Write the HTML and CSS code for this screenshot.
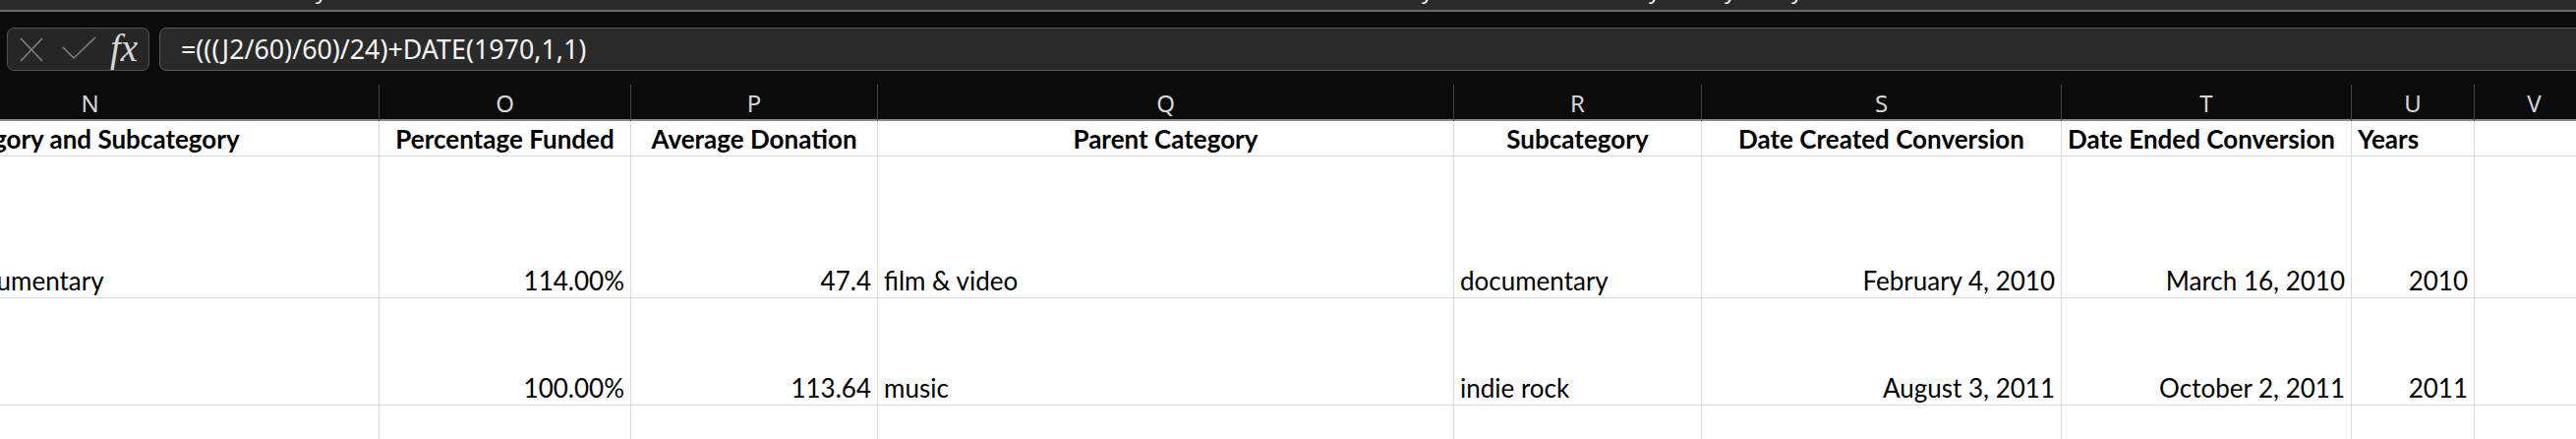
FILE: index.html
```html
<!DOCTYPE html>
<html lang="en">
<head>
<meta charset="utf-8">
<title>Sheet</title>
<link rel="stylesheet" href="styles.css">
</head>
<body>
<div class="app">
  <div class="ribbon">
    <span class="tail t1">y</span>
    <span class="tail t2">y</span>
    <span class="tail t3">y</span>
    <span class="tail t4">y</span>
    <span class="tail t5">y</span>
  </div>
  <div class="fbar">
    <div class="fbtns">
      <svg class="ic-x" width="24" height="25" viewBox="0 0 24 25"><path d="M1 1 L23 24 M23 1 L1 24" stroke="#808080" stroke-width="1.6" fill="none"/></svg>
      <svg class="ic-ok" width="36" height="24" viewBox="0 0 36 24"><path d="M1 11 L12 22 L34 1" stroke="#808080" stroke-width="1.6" fill="none"/></svg>
      <span class="fx">fx</span>
    </div>
    <div class="finput">=(((J2/60)/60)/24)+DATE(1970,1,1)</div>
  </div>
  <div class="sheet">
    <div class="grid colhead">
      <div class="ch">N</div><div class="ch">O</div><div class="ch">P</div><div class="ch">Q</div><div class="ch">R</div><div class="ch">S</div><div class="ch">T</div><div class="ch">U</div><div class="ch">V</div>
    </div>
    <div class="grid row r1">
      <div class="c b ctr">Category and Subcategory</div>
      <div class="c b ctr">Percentage Funded</div>
      <div class="c b ctr">Average Donation</div>
      <div class="c b ctr">Parent Category</div>
      <div class="c b ctr">Subcategory</div>
      <div class="c b ctr">Date Created Conversion</div>
      <div class="c b">Date Ended Conversion</div>
      <div class="c b">Years</div>
      <div class="c"></div>
    </div>
    <div class="grid row r2">
      <div class="c catsub">film &amp; video/documentary</div>
      <div class="c num">114.00%</div>
      <div class="c num">47.4</div>
      <div class="c">film &amp; video</div>
      <div class="c">documentary</div>
      <div class="c num">February 4, 2010</div>
      <div class="c num">March 16, 2010</div>
      <div class="c num">2010</div>
      <div class="c"></div>
    </div>
    <div class="grid row r3">
      <div class="c catsub">music/indie rock</div>
      <div class="c num">100.00%</div>
      <div class="c num">113.64</div>
      <div class="c">music</div>
      <div class="c">indie rock</div>
      <div class="c num">August 3, 2011</div>
      <div class="c num">October 2, 2011</div>
      <div class="c num">2011</div>
      <div class="c"></div>
    </div>
    <div class="grid row r4">
      <div class="c"></div><div class="c"></div><div class="c"></div><div class="c"></div><div class="c"></div><div class="c"></div><div class="c"></div><div class="c"></div><div class="c"></div>
    </div>
  </div>
</div>
</body>
</html>
```
FILE: styles.css
```css
* { box-sizing: border-box; }
html, body { margin: 0; padding: 0; }
body { width: 2620px; height: 446px; overflow: hidden; background: #0b0b0b; }
.app { width: 2620px; height: 446px; overflow: hidden; background: #0b0b0b; }

.ribbon {
  height: 12px;
  background: #2a2a2a;
  border-bottom: 2px solid #6b6b6b;
  overflow: hidden;
  display: flex;
  align-items: flex-start;
}
.tail {
  font-family: "Noto Sans", sans-serif;
  font-size: 22px;
  line-height: 22px;
  color: #f2f2f2;
  margin-top: -21px;
  width: 12px;
  flex: none;
}
.t1 { margin-left: 321px; }
.t2 { margin-left: 1113px; }
.t3 { margin-left: 219px; }
.t4 { margin-left: 65px; }
.t5 { margin-left: 56px; }

.fbar {
  display: flex;
  padding: 16px 0 14px 7px;
  margin-right: -20px;
}
.fbtns {
  width: 145px;
  height: 44px;
  border: 1px solid #525252;
  border-radius: 7px;
  background: #262626;
  display: flex;
  align-items: center;
  padding-left: 12px;
  flex: none;
}
.ic-x { display: block; margin-top: 1px; flex: none; }
.ic-ok { display: block; margin-left: 19px; margin-top: -2px; flex: none; }
.fx {
  font-family: "Liberation Serif", serif;
  font-style: italic;
  font-size: 39px;
  color: #d6d6d6;
  margin-left: 13px;
  line-height: 1;
  margin-top: -4px;
}
.finput {
  flex: 1;
  margin-left: 10px;
  height: 44px;
  border: 1px solid #5a5a5a;
  border-radius: 7px;
  background: #2a2a2a;
  color: #f4f4f4;
  font-family: "Noto Sans", "Open Sans", sans-serif;
  font-size: 26.8px;
  line-height: 41px;
  padding-left: 21px;
  white-space: nowrap;
}

.sheet { margin-left: -202px; }
.grid {
  display: grid;
  grid-template-columns: 588px 256px 251px 586px 252px 366px 295px 125px 122px 200px;
}
.colhead {
  height: 37px;
  border-bottom: 2px solid #8a8a8a;
}
.ch {
  border-right: 1px solid #444;
  color: #d6d6d6;
  font-family: "Noto Sans", sans-serif;
  font-size: 24px;
  line-height: 37px;
  text-align: center;
}

.row { background: #fff; }
.r1 { height: 36px; }
.r2 { height: 144px; }
.r3 { height: 109px; }
.r4 { height: 40px; }
.c {
  border-right: 1px solid #dadada;
  border-bottom: 1px solid #dadada;
  display: flex;
  align-items: flex-end;
  padding: 0 6px 1px;
  font-family: Lato, "Liberation Sans", sans-serif;
  font-size: 26px;
  line-height: 31px;
  color: #000;
  white-space: nowrap;
  overflow: visible;
}
.b { font-weight: 700; }
.ctr { justify-content: center; }
.num { justify-content: flex-end; }
.catsub { padding-left: 10px; }
```
